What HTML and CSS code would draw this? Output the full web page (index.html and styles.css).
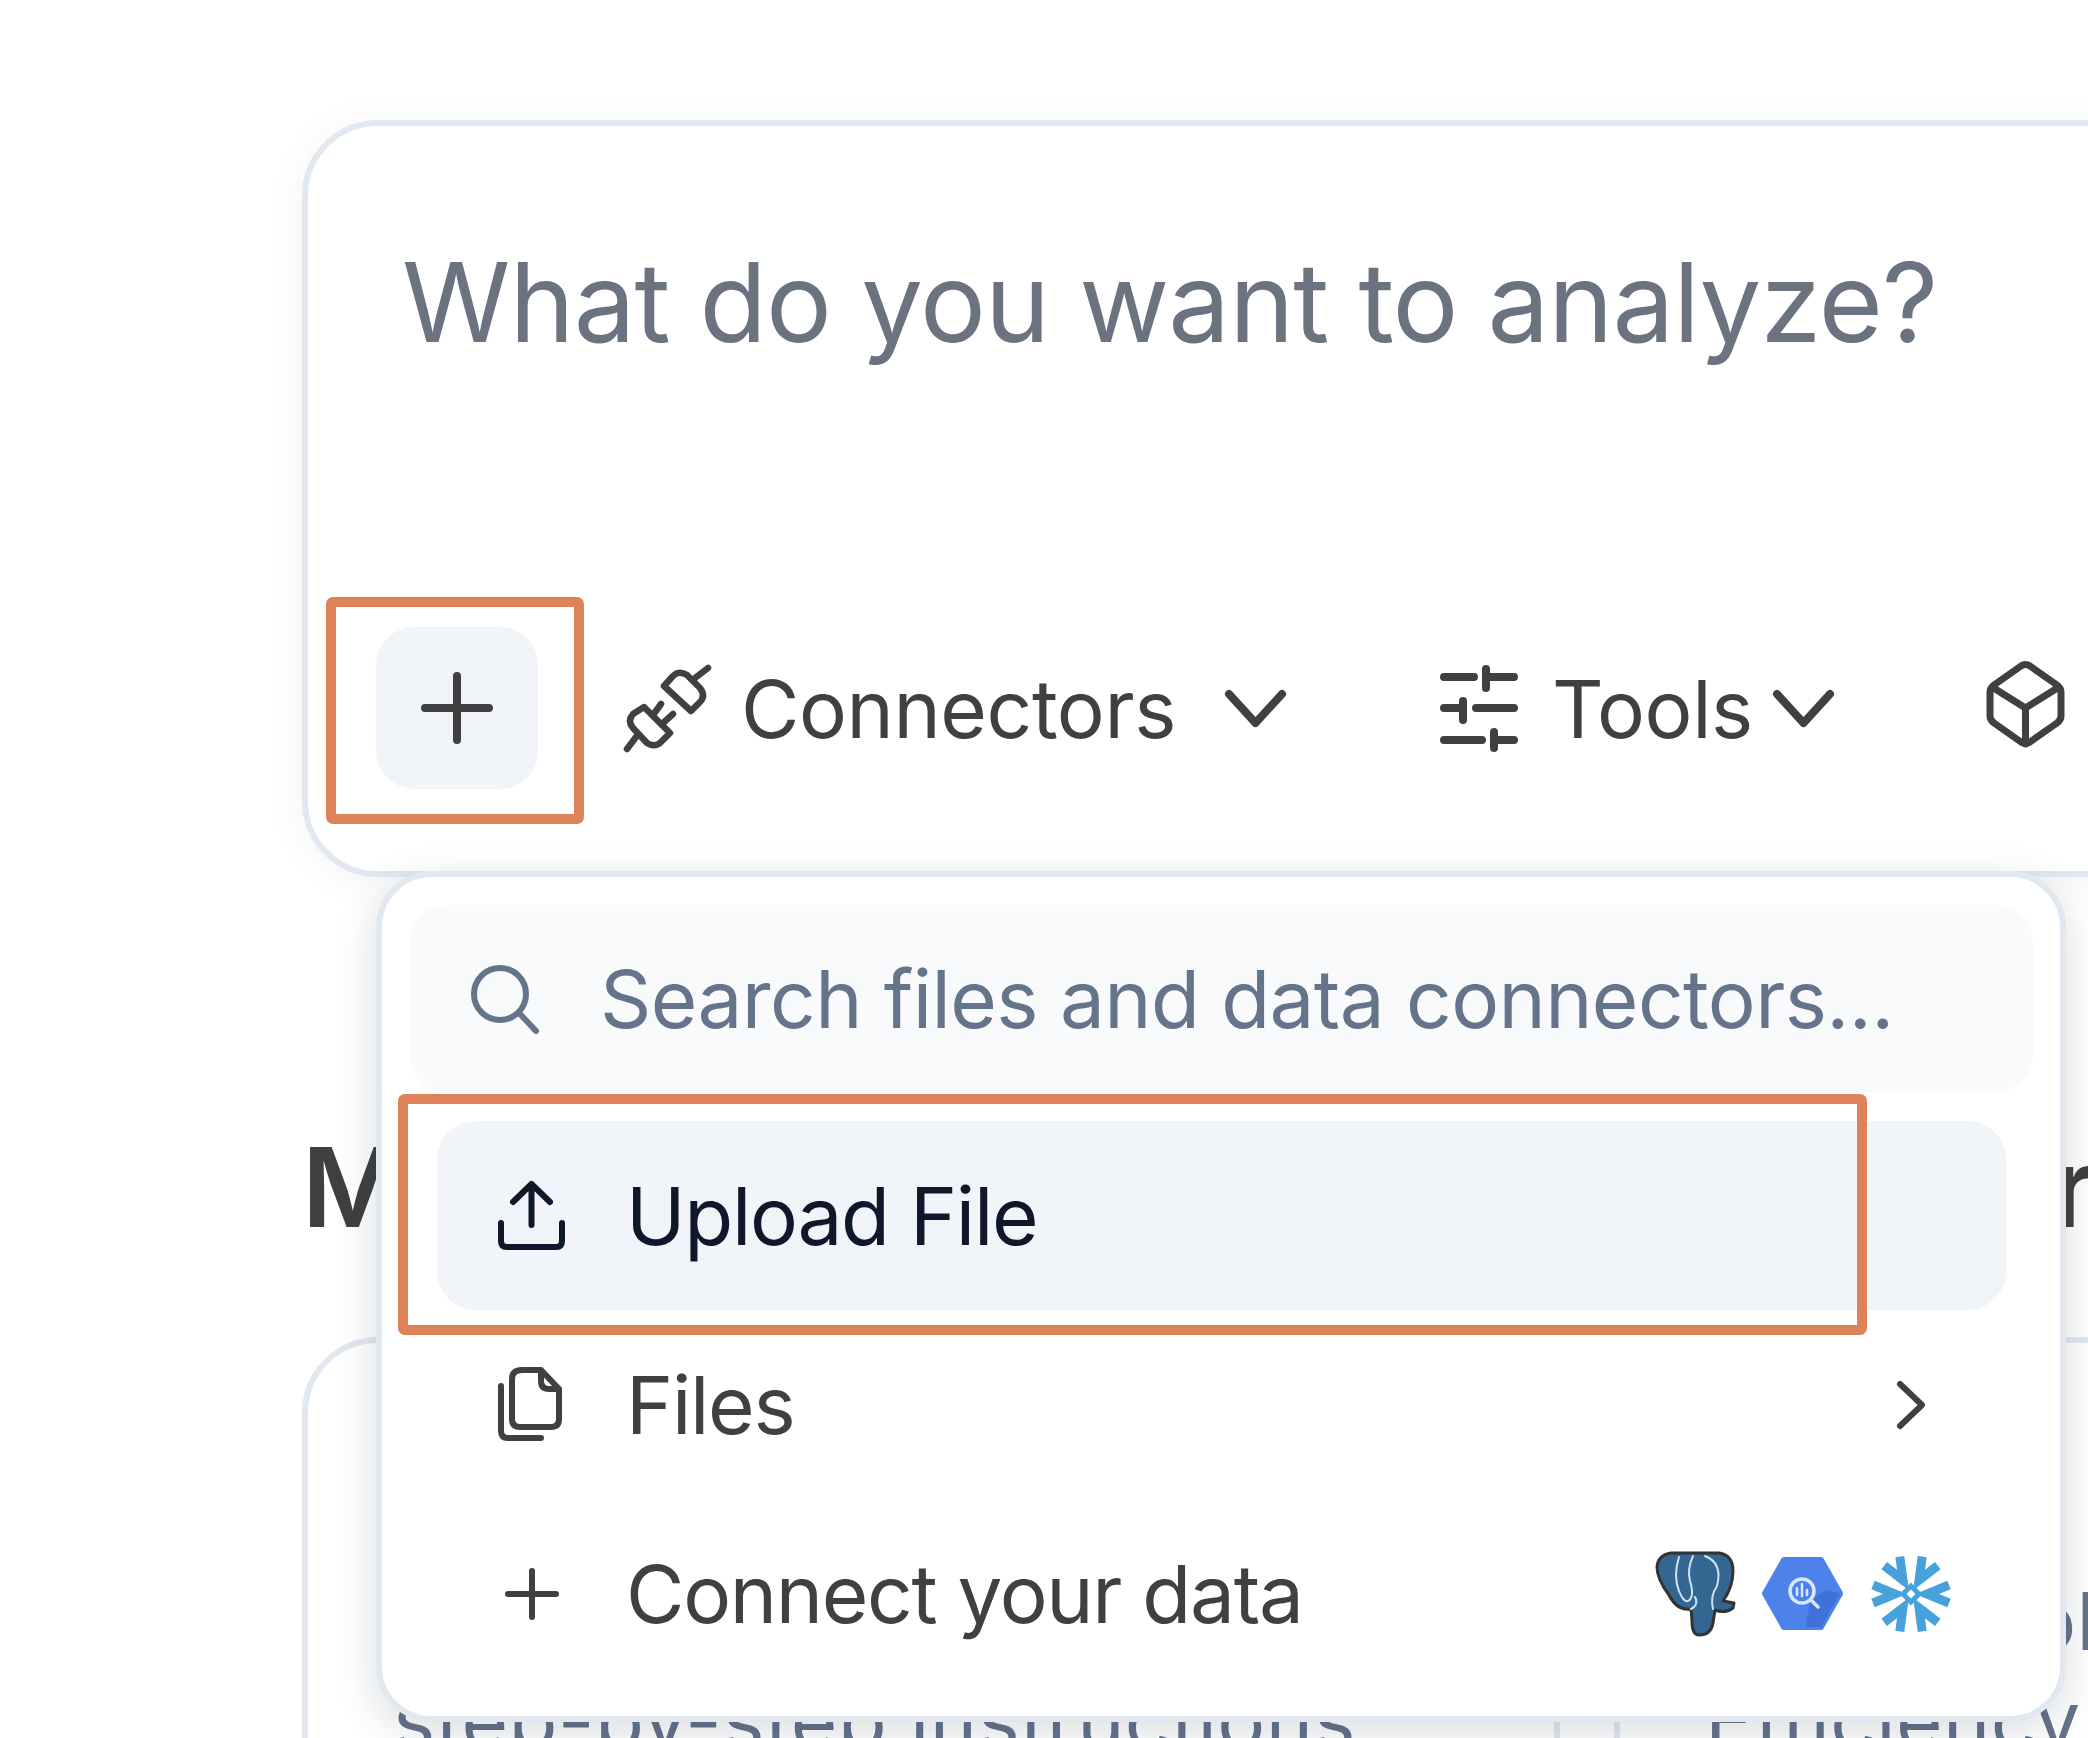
FILE: index.html
```html
<!DOCTYPE html>
<html lang="en">
<head>
  <meta charset="UTF-8">
  <meta name="viewport" content="width=device-width, initial-scale=1">
  <title>Analyze</title>
  <link rel="stylesheet" href="styles.css">
</head>
<body>
  <div class="page">
    <!-- Prompt box -->
    <div class="composer">
      <div class="composer-text">What do you want to analyze?</div>
      <div class="toolbar">
        <div class="add-wrap">
          <button class="add-btn" type="button">
            <svg class="icon-add" viewBox="0 0 72 72"><path d="M4 36H68M36 4V68"/></svg>
          </button>
          <div class="highlight"></div>
        </div>
        <svg class="icon-plug" viewBox="0 0 86 87"><path d="M40 21l9-10q6-6 14-1l13 13q6 8 0 14l-9 9zM71 13L84 3M20 42L46 68l-9 9q-6 6-14 1L9 63q-6-7 0-14zM29 50l8-11M38 59l11-10M12 72L3 84"/></svg>
        <span class="tool-label label-connectors">Connectors</span>
        <svg class="icon-chevron chevron-connectors" viewBox="0 0 61 37"><path d="M4 4L30.500 33L57 4"/></svg>
        <svg class="icon-sliders" viewBox="0 0 78 87"><path d="M4 12H34M46 4V23M46 12H74M4 43H23M23 36V55M36 43H74M4 75H42M54 67V83M54 75H74"/></svg>
        <span class="tool-label label-tools">Tools</span>
        <svg class="icon-chevron chevron-tools" viewBox="0 0 61 37"><path d="M4 4L30.500 33L57 4"/></svg>
        <svg class="icon-cube" viewBox="0 0 79 86"><path d="M35 5Q39.500 2 44 5L71 24Q75 27 75 31V55Q75 59 71 62L44 81Q39.500 84 35 81L8 62Q4 59 4 55V31Q4 27 8 24ZM6 26L39.500 47L73 26M39.500 47V83"/></svg>
      </div>
    </div>

    <!-- Content behind the menu -->
    <h2 class="section-title"><span>Most</span><span class="title-end">r</span></h2>
    <div class="cards">
      <div class="card card-left">
        <div class="card-line">step-by-step instructions</div>
      </div>
      <div class="card card-right">
        <div class="card-head">Roadmap</div>
        <div class="card-line">Build a solid</div>
        <div class="card-line">Efficiency</div>
      </div>
    </div>

    <!-- Add menu -->
    <div class="menu">
      <div class="menu-search">
        <svg class="icon-search" viewBox="0 0 69 70"><circle cx="30" cy="30" r="26"/><path d="M50 50L66 67"/></svg>
        <span>Search files and data connectors...</span>
      </div>
      <div class="menu-list">
        <div class="menu-row active">
          <svg class="row-icon" viewBox="0 0 67 69"><path d="M33.500 3V44M15 21L33.500 3L52 21M3 42V60Q3 66 9 66H58Q64 66 64 60V42"/></svg>
          <span>Upload File</span>
          <div class="highlight"></div>
        </div>
        <div class="menu-row">
          <svg class="row-icon" viewBox="0 0 67 75"><path d="M24 3H43L61 22V52Q61 60 53 60H22Q14 60 14 52V12Q14 3 24 3ZM43 3V14Q43 22 51 22H61M3 19V64Q3 71 10 71H43"/></svg>
          <span>Files</span>
          <svg class="icon-arrow" viewBox="0 0 28 48"><path d="M3 3L25 24L3 45"/></svg>
        </div>
        <div class="menu-row row-connect">
          <svg class="row-icon" viewBox="0 0 67 54"><path d="M10 27H58M34 4V50"/></svg>
          <span>Connect your data</span>
          <div class="logos">
            <svg class="logo-pg" viewBox="0 0 80 85">
              <path class="pg-body" d="M16 2H64Q78 4 78 20Q78 36 68 50L79 52L78 57Q70 63 60 59L58 72Q56 84 44 84Q37 84 37 70L36 58Q22 60 14 44Q2 28 2 16Q3 4 16 2Z"/>
              <path class="pg-line" d="M24 6Q18 25 24 40Q29 52 33 50Q40 46 35 30Q32 18 38 5M50 5Q68 12 62 35Q55 45 58 58M36 58Q44 54 40 46"/>
            </svg>
            <svg class="logo-bq" viewBox="0 0 81 73">
              <path class="bq-hex" d="M22 3H59L78 36.500L59 70H22L3 36.500Z"/>
              <path class="bq-shade" d="M48 44L64 33L78 36.500L59 70H44Z"/>
              <circle class="bq-lens" cx="40" cy="34" r="12"/>
              <path class="bq-lens" d="M49 43L56 50"/>
              <path class="bq-bars" d="M35 31V38M40 27V39M45 33V38"/>
            </svg>
            <svg class="logo-snow" viewBox="0 0 82 82">
              <defs><path id="snow-arm" d="M3 32L25 41L3 50"/></defs>
              <use href="#snow-arm"/>
              <use href="#snow-arm" transform="rotate(60 41 41)"/>
              <use href="#snow-arm" transform="rotate(120 41 41)"/>
              <use href="#snow-arm" transform="rotate(180 41 41)"/>
              <use href="#snow-arm" transform="rotate(240 41 41)"/>
              <use href="#snow-arm" transform="rotate(300 41 41)"/>
              <path class="snow-core" d="M41 33L49 41L41 49L33 41Z"/>
            </svg>
          </div>
        </div>
      </div>
    </div>
  </div>
</body>
</html>
```

FILE: styles.css
```css
html, body {
  margin: 0;
  background: #fff;
}
body {
  font-family: 'Inter', 'Liberation Sans', sans-serif;
  color: #404040;
}
.page {
  position: relative;
  height: 1738px;
  overflow: hidden;
  padding: 120px 0 0 302px;
  box-sizing: border-box;
}
svg {
  display: block;
  flex: none;
  fill: none;
  stroke: #404040;
  stroke-linecap: round;
  stroke-linejoin: round;
  overflow: visible;
}

/* prompt box */
.composer {
  box-sizing: border-box;
  width: 1900px;
  height: 757px;
  border: 6px solid #e2e8f0;
  border-radius: 76px;
  background: #fff;
  box-shadow: 0 4px 40px rgba(15, 23, 42, 0.05);
}
.composer-text {
  padding: 110px 0 0 94px;
  font-size: 110px;
  line-height: 133px;
  letter-spacing: -0.9px;
  color: #6b7280;
  white-space: nowrap;
}
.toolbar {
  display: flex;
  align-items: center;
  height: 162px;
  margin-top: 258px;
  padding-left: 68px;
}
.add-wrap {
  position: relative;
}
.add-btn {
  display: flex;
  align-items: center;
  justify-content: center;
  width: 162px;
  height: 162px;
  padding: 0;
  border: none;
  border-radius: 38px;
  background: #f1f5f9;
}
.icon-add {
  width: 72px;
  height: 72px;
  stroke-width: 8;
}
.highlight {
  position: absolute;
  box-sizing: border-box;
  border: 10px solid #dd8259;
  border-radius: 7px;
}
.add-wrap .highlight {
  top: -30px;
  right: -46px;
  bottom: -35px;
  left: -50px;
}
.icon-plug {
  width: 86px;
  height: 87px;
  margin-left: 86px;
  stroke-width: 6.5;
}
.tool-label {
  font-size: 80px;
  letter-spacing: -0.4px;
  white-space: nowrap;
}
.label-connectors {
  margin-left: 31px;
}
.icon-chevron {
  width: 61px;
  height: 37px;
  stroke-width: 8;
}
.chevron-connectors {
  margin-left: 49px;
}
.icon-sliders {
  width: 78px;
  height: 87px;
  margin-left: 154px;
  stroke-width: 8;
}
.label-tools {
  margin-left: 34px;
}
.chevron-tools {
  margin-left: 20px;
}
.icon-cube {
  width: 79px;
  height: 86px;
  margin-bottom: 8px;
  margin-left: 152px;
  stroke-width: 7;
}

/* behind the menu */
.section-title {
  display: flex;
  justify-content: space-between;
  width: 1794px;
  margin: 0;
  padding: 244px 0 0 0;
  font-size: 110px;
  font-weight: 600;
  line-height: 133px;
  color: #404040;
}
.cards {
  display: flex;
  gap: 54px;
  margin-top: 83px;
}
.card {
  flex: none;
  box-sizing: border-box;
  height: 600px;
  border: 6px solid #e2e8f0;
  border-radius: 76px;
  padding-left: 85px;
}
.card-left {
  width: 1258px;
  padding-top: 327px;
}
.card-right {
  width: 1000px;
  padding-top: 86px;
}
.card-line {
  font-size: 80px;
  line-height: 99px;
  letter-spacing: 0.4px;
  color: #64748b;
  white-space: nowrap;
}
.card-head {
  font-size: 80px;
  font-weight: 600;
  line-height: 99px;
  margin-bottom: 43px;
  white-space: nowrap;
}

/* add menu */
.menu {
  position: absolute;
  top: 871px;
  left: 376px;
  box-sizing: border-box;
  width: 1690px;
  height: 851px;
  padding: 28px 27px 0 28px;
  border: 6px solid #e2e8f0;
  border-radius: 56px;
  background: #fff;
  box-shadow: 0 12px 44px rgba(15, 23, 42, 0.14);
}
.menu-search {
  display: flex;
  align-items: center;
  height: 187px;
  padding-left: 60px;
  border-radius: 36px;
  background: #f8fafc;
  font-size: 80px;
  letter-spacing: -0.6px;
  color: #64748b;
  white-space: nowrap;
}
.icon-search {
  width: 69px;
  height: 70px;
  margin-right: 61px;
  stroke: #64748b;
  stroke-width: 6;
}
.menu-list {
  margin: 29px 27px 0 27px;
}
.menu-row {
  position: relative;
  display: flex;
  align-items: center;
  height: 189px;
  padding: 0 81px 0 61px;
  border-radius: 38px;
  font-size: 80px;
  letter-spacing: -1.3px;
  white-space: nowrap;
}
.menu-row .row-icon {
  width: 67px;
  margin-right: 61px;
  stroke-width: 6;
}
.menu-row.active {
  background: #f1f5f9;
  color: #0f172a;
}
.menu-row.active .row-icon {
  height: 69px;
  stroke: #0f172a;
}
.menu-row .highlight {
  top: -27px;
  right: 139px;
  bottom: -25px;
  left: -39px;
}
.menu-row:nth-child(2) .row-icon {
  height: 75px;
}
.row-connect .row-icon {
  height: 54px;
}
.row-connect {
  padding-right: 54px;
}
.icon-arrow {
  width: 28px;
  height: 48px;
  margin-left: auto;
  stroke-width: 6;
}
.logos {
  display: flex;
  align-items: center;
  gap: 27px;
  margin-left: auto;
}
.logo-pg {
  width: 80px;
  height: 85px;
}
.pg-body {
  fill: #336791;
  stroke: #333;
  stroke-width: 3;
}
.pg-line {
  stroke: #cfe3f2;
  stroke-width: 2;
}
.logo-bq {
  width: 81px;
  height: 73px;
}
.bq-hex {
  fill: #4d82ea;
  stroke: #4d82ea;
  stroke-width: 6;
}
.bq-shade {
  fill: #3f71d8;
  stroke: none;
}
.bq-lens {
  stroke: #d9e6fb;
  stroke-width: 3.5;
}
.bq-bars {
  stroke: #d9e6fb;
  stroke-width: 2.5;
}
.logo-snow {
  width: 82px;
  height: 82px;
  stroke: #47a2dc;
  stroke-width: 9;
  stroke-linecap: butt;
  stroke-linejoin: miter;
}
.snow-core {
  stroke-width: 5;
}
```
